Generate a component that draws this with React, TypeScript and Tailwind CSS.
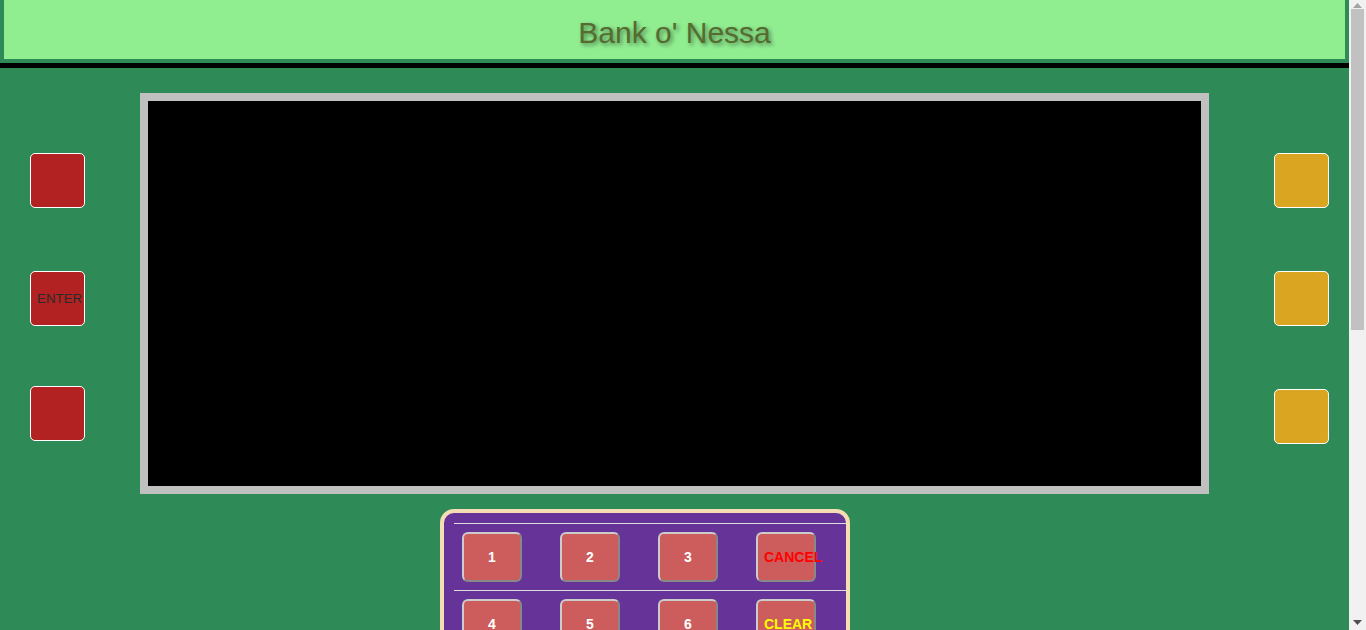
const keyRows = [
  ["1", "2", "3", "CANCEL"],
  ["4", "5", "6", "CLEAR"],
  ["7", "8", "9", "ENTER"],
  ["", "0", "", ""],
]

function keyColor(label: string) {
  if (label === "CANCEL") return "text-[#FF0000]"
  if (label === "CLEAR") return "text-[#FFFF00]"
  if (label === "ENTER") return "text-[#00FF00]"
  return "text-white"
}

function SideButton({ color, label, className }: { color: string; label?: string; className?: string }) {
  return (
    <button
      className={`${color} ${className ?? ""} block w-[55px] h-[55px] rounded-[5px] border border-white px-[6px] text-left text-[13.33px] text-[#2b2b2b] whitespace-nowrap overflow-visible`}
    >
      {label}
    </button>
  )
}

// browser scrollbar as it shows in the screenshot
function FakeScrollbar() {
  return (
    <div className="fixed top-0 right-0 h-screen w-[17px] bg-[#f1f1f1]">
      <svg className="absolute top-[3px] left-[4px]" width="9" height="6" viewBox="0 0 9 6">
        <polygon points="4.5,0 9,5 0,5" fill="#a3a3a3" />
      </svg>
      <div className="absolute top-[9px] left-[2px] w-[13px] h-[321px] bg-[#c1c1c1]" />
      <svg className="absolute bottom-[4px] left-[4px]" width="9" height="6" viewBox="0 0 9 6">
        <polygon points="0,0 9,0 4.5,5" fill="#505050" />
      </svg>
    </div>
  )
}

export default function App() {
  return (
    <div className="w-[1349px] min-h-[820px] bg-[#2E8B57] font-['Liberation_Sans',Arial,sans-serif]">

      {/* Header */}
      <header className="h-[63px] bg-[#90EE90] border-x-4 border-b-4 border-[#2E8B57]">
        <h1 className="pt-[16px] text-center text-[30px] leading-[34px] text-[#556B2F] [text-shadow:2px_2px_4px_rgba(0,0,0,0.45)]">
          Bank o' Nessa
        </h1>
      </header>
      <div className="h-[5px] bg-black" />

      {/* ATM body */}
      <div className="flex pt-[25px]">

        {/* Left buttons */}
        <div className="ml-[30px] pt-[60px] flex flex-col">
          <SideButton color="bg-[#B22222]" />
          <SideButton color="bg-[#B22222]" label="ENTER" className="mt-[63px]" />
          <SideButton color="bg-[#B22222]" className="mt-[60px]" />
        </div>

        {/* Screen */}
        <div className="ml-[55px] w-[1069px] h-[401px] border-8 border-[#C0C0C0] bg-black" />

        {/* Right buttons */}
        <div className="ml-[65px] pt-[60px] flex flex-col">
          <SideButton color="bg-[#DAA520]" />
          <SideButton color="bg-[#DAA520]" className="mt-[63px]" />
          <SideButton color="bg-[#DAA520]" className="mt-[63px]" />
        </div>

      </div>

      {/* Keypad */}
      <div className="ml-[440px] mt-[15px] w-[410px] rounded-[14px] border-4 border-[#F5DEB3] bg-[#663399] pt-[10px] pl-[10px] pb-[10px]">
        {keyRows.map((row, i) => (
          <div key={i} className="flex border-t border-[#ddd]">
            {row.map((label, j) => (
              <div key={j} className="w-[98px] py-[8px] pl-[8px]">
                {label !== "" && (
                  <button
                    className={`${keyColor(label)} block w-[60px] h-[50px] rounded-[6px] border-2 border-t-[#ccc] border-l-[#ccc] border-r-[#888] border-b-[#888] bg-[#CD5C5C] px-[6px] text-[14px] font-bold whitespace-nowrap overflow-visible text-center`}
                  >
                    {label}
                  </button>
                )}
              </div>
            ))}
          </div>
        ))}
      </div>

      <FakeScrollbar />
    </div>
  )
}
